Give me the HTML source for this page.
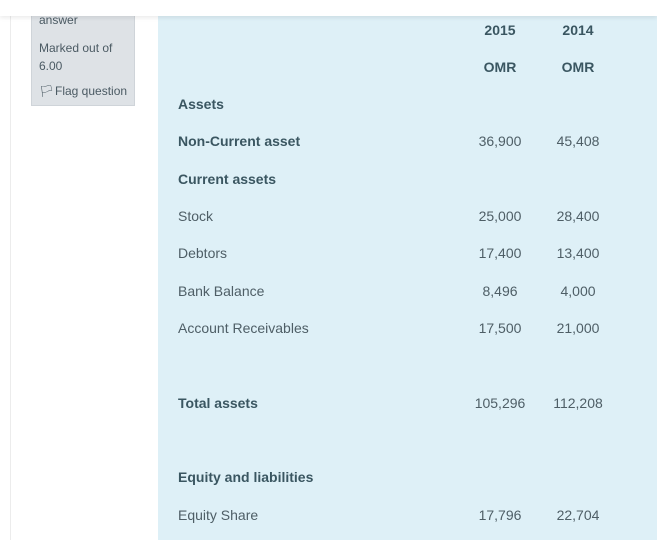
<!DOCTYPE html>
<html><head><style>
body{margin:0;width:657px;height:540px;overflow:hidden;background:#fff;font-family:"Liberation Sans",sans-serif;position:relative}
.ln{position:absolute;left:10px;top:0;width:1px;height:540px;background:#ececec}
.top{position:absolute;left:0;top:0;width:657px;height:16px;background:#fff;box-shadow:0 2px 4px rgba(0,0,0,.08);z-index:3}
.box{position:absolute;left:31px;top:0;width:104px;height:106px;background:#dee2e6;border:1px solid #cfd4d9;box-sizing:border-box;font-size:12px;color:#4b5a63}
.panel{position:absolute;left:158px;top:16px;width:499px;height:524px;background:#def0f7}
.t{position:absolute;font-size:14px;color:#4e5e66;transform:translateY(-50%);white-space:nowrap}
.b{font-weight:bold;color:#3a5661}
.c{transform:translate(-50%,-50%)}
</style></head><body>
<div class="ln"></div>
<div class="box">
<div style="position:absolute;left:7px;top:12px">answer</div>
<div style="position:absolute;left:7px;top:38px;line-height:18px">Marked out of<br>6.00</div>
<div style="position:absolute;left:7px;top:83px">&#x1F3F3;&#xFE0E;</div>
<div style="position:absolute;left:23px;top:83px">Flag question</div>
</div>
<div class="top"></div>
<div class="panel"></div>
<div class="t b c" style="left:500px;top:30px">2015</div>
<div class="t b c" style="left:578px;top:30px">2014</div>
<div class="t b c" style="left:500px;top:67px">OMR</div>
<div class="t b c" style="left:578px;top:67px">OMR</div>
<div class="t b" style="left:178px;top:104px">Assets</div>
<div class="t b" style="left:178px;top:141px">Non-Current asset</div>
<div class="t c" style="left:500px;top:141px">36,900</div>
<div class="t c" style="left:578px;top:141px">45,408</div>
<div class="t b" style="left:178px;top:179px">Current assets</div>
<div class="t" style="left:178px;top:216px">Stock</div>
<div class="t c" style="left:500px;top:216px">25,000</div>
<div class="t c" style="left:578px;top:216px">28,400</div>
<div class="t" style="left:178px;top:253px">Debtors</div>
<div class="t c" style="left:500px;top:253px">17,400</div>
<div class="t c" style="left:578px;top:253px">13,400</div>
<div class="t" style="left:178px;top:291px">Bank Balance</div>
<div class="t c" style="left:500px;top:291px">8,496</div>
<div class="t c" style="left:578px;top:291px">4,000</div>
<div class="t" style="left:178px;top:328px">Account Receivables</div>
<div class="t c" style="left:500px;top:328px">17,500</div>
<div class="t c" style="left:578px;top:328px">21,000</div>
<div class="t b" style="left:178px;top:403px">Total assets</div>
<div class="t c" style="left:500px;top:403px">105,296</div>
<div class="t c" style="left:578px;top:403px">112,208</div>
<div class="t b" style="left:178px;top:477px">Equity and liabilities</div>
<div class="t" style="left:178px;top:515px">Equity Share</div>
<div class="t c" style="left:500px;top:515px">17,796</div>
<div class="t c" style="left:578px;top:515px">22,704</div>
</body></html>
